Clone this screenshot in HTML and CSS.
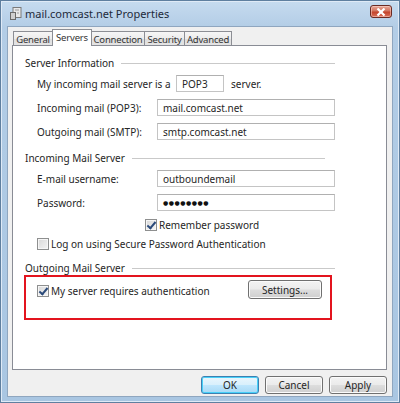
FILE: index.html
```html
<!DOCTYPE html>
<html>
<head>
<meta charset="utf-8">
<link rel="stylesheet" href="styles.css">
</head>
<body>
<div class="window">
  <div class="titlebar">
    <svg class="app-icon" width="12" height="13" viewBox="0 0 12 13">
      <rect x="3" y="0.5" width="8" height="10" fill="#e8e8e8" stroke="#7a7a7a"/>
      <rect x="0.5" y="5.5" width="5" height="7" fill="#cfcfcf" stroke="#6a6a6a"/>
      <line x1="5" y1="3" x2="9" y2="3" stroke="#9a9a9a"/>
      <line x1="7" y1="6" x2="9" y2="6" stroke="#9a9a9a"/>
    </svg>
    <span class="title">mail.comcast.net Properties</span>
    <div class="close">
      <svg width="10" height="8" viewBox="0 0 10 8"><path d="M1.5 0.5 L8.5 7.5 M8.5 0.5 L1.5 7.5" stroke="#fff" stroke-width="2.2"/></svg>
    </div>
  </div>
  <div class="client">
    <div class="tabs">
      <div class="tab tab-general">General</div>
      <div class="tab tab-active tab-servers">Servers</div>
      <div class="tab tab-connection">Connection</div>
      <div class="tab tab-security">Security</div>
      <div class="tab tab-advanced">Advanced</div>
    </div>
    <div class="panel">
      <div class="group-title gt-1"><span>Server Information</span><i></i></div>
      <div class="row row-first">
        <span class="label label-wide">My incoming mail server is a</span>
        <span class="box box-small">POP3</span>
        <span class="after">server.</span>
      </div>
      <div class="row">
        <span class="label">Incoming mail (POP3):</span>
        <span class="box">mail.comcast.net</span>
      </div>
      <div class="row">
        <span class="label">Outgoing mail (SMTP):</span>
        <span class="box">smtp.comcast.net</span>
      </div>

      <div class="group-title gt-2"><span>Incoming Mail Server</span><i></i></div>
      <div class="row row-first">
        <span class="label">E-mail username:</span>
        <span class="box">outboundemail</span>
      </div>
      <div class="row">
        <span class="label">Password:</span>
        <span class="box box-pass">●●●●●●●●</span>
      </div>
      <div class="check-row check-remember">
        <span class="check checked"></span><span>Remember password</span>
      </div>
      <div class="check-row check-logon">
        <span class="check"></span><span>Log on using Secure Password Authentication</span>
      </div>

      <div class="group-title gt-3"><span>Outgoing Mail Server</span><i></i></div>
      <div class="highlight">
        <div class="check-row check-auth">
          <span class="check checked"></span><span>My server requires authentication</span>
        </div>
        <div class="btn btn-settings">Settings...</div>
      </div>
    </div>
    <div class="buttons">
      <div class="btn btn-ok">OK</div>
      <div class="btn">Cancel</div>
      <div class="btn">Apply</div>
    </div>
  </div>
</div>
</body>
</html>
```

FILE: styles.css
```css
* { box-sizing: border-box; }
html, body { margin: 0; padding: 0; }
body {
  width: 400px;
  height: 403px;
  overflow: hidden;
  font-family: "Noto Sans", "DejaVu Sans", sans-serif;
  font-size: 10px;
  color: #262626;
}
.window {
  width: 400px;
  height: 403px;
  display: flex;
  flex-direction: column;
  background: linear-gradient(180deg, #c6dbef 0px, #b3cde6 26px, #a9c6e2 100%);
  border: 1px solid #5f7f9f;
  box-shadow: inset 1px 1px 0 #dfeaf6, inset -1px -1px 0 #dfeaf6;
}
.titlebar {
  height: 25px;
  flex: none;
  display: flex;
  align-items: center;
  padding: 0 7px 0 9px;
}
.app-icon { flex: none; margin-top: -1px; }
.title {
  margin-left: 3px;
  font-size: 11px;
  color: #1d2a3a;
  flex: 1;
}
.close {
  width: 22px;
  height: 13px;
  margin-top: -4px;
  border: 1px solid #6b2a23;
  border-radius: 3px;
  background: linear-gradient(180deg, #e9a99a 0%, #d2735e 45%, #c4432b 55%, #d8705a 100%);
  display: flex;
  align-items: center;
  justify-content: center;
  box-shadow: inset 0 0 0 1px rgba(255,220,210,0.5);
}
.client {
  flex: 1;
  margin: 0 6px 5px 6px;
  background: #f0f0f0;
  border: 1px solid #8fa6bf;
  padding: 2px 4px 0 4px;
  display: flex;
  flex-direction: column;
}
.tabs {
  display: flex;
  height: 16px;
  padding-left: 1px;
  position: relative;
  z-index: 1;
  align-items: flex-end;
  font-size: 9.5px;
  letter-spacing: -0.2px;
}
.tab {
  height: 14px;
  border: 1px solid #8c8e94;
  border-bottom: none;
  border-right: none;
  background: linear-gradient(180deg, #f6f6f6 0%, #ececec 50%, #dedede 51%, #e4e4e4 100%);
  display: flex;
  align-items: center;
  justify-content: center;
  color: #333;
  padding-top: 1px;
  white-space: nowrap;
}
.tab-advanced { border-right: 1px solid #8c8e94; }
.tab-general { width: 39px; }
.tab-servers { width: 40px; }
.tab-connection { width: 52px; }
.tab-security { width: 40px; }
.tab-advanced { width: 48px; }
.tab-active {
  height: 17px;
  margin-bottom: -1px;
  background: #fff;
  border-right: 1px solid #8c8e94;
  align-items: flex-start;
  padding-top: 1px;
}
.tab-active + .tab { border-left: none; }
.panel {
  height: 325px;
  background: #fff;
  border: 1px solid #898c95;
  padding: 10px 0 0 12px;
  margin-right: 1px;
}
.group-title {
  display: flex;
  align-items: center;
  height: 14px;
}
.group-title i {
  flex: 1;
  height: 1px;
  background: #c9c9c9;
  margin-left: 7px;
  margin-top: 1px;
}
.gt-1 { width: 310px; }
.gt-2 { width: 300px; margin-top: 11px; }
.gt-3 { width: 310px; margin-top: 11px; }
.row {
  display: flex;
  align-items: center;
  height: 17px;
  margin-top: 7px;
  padding-left: 12px;
}
.row-first { margin-top: 5px; }
.label { width: 120px; flex: none; }
.label-wide { width: 139px; }
.box {
  width: 178px;
  height: 17px;
  border: 1px solid #c4c4c4;
  border-top-color: #b0b0b0;
  display: flex;
  align-items: center;
  padding-left: 5px;
}
.box-small { width: 48px; }
.box-pass { font-size: 6px; letter-spacing: 0.5px; color: #111; }
.after { margin-left: 7px; }
.check-row {
  display: flex;
  align-items: center;
  height: 13px;
}
.check-remember { margin-top: 7px; padding-left: 120px; }
.check-logon { margin-top: 6px; padding-left: 12px; }
.check {
  width: 12px;
  height: 12px;
  border: 1px solid #8e8f8f;
  background: linear-gradient(135deg, #d8d8d8 0%, #f4f4f4 100%);
  box-shadow: inset 0 0 0 1px #f6f6f6;
  margin-right: 2px;
  position: relative;
  flex: none;
}
.check.checked::after {
  content: "";
  position: absolute;
  left: 3px;
  top: 0px;
  width: 3px;
  height: 7px;
  border: solid #2b4a7a;
  border-width: 0 2px 2px 0;
  transform: rotate(40deg);
}
.highlight {
  margin-left: -1px;
  width: 308px;
  height: 45px;
  border: 2px solid #e3141e;
  display: flex;
  align-items: flex-start;
  justify-content: space-between;
  padding: 3px 8px 0 11px;
}
.check-auth { margin-top: 4px; }
.btn {
  width: 58px;
  height: 18px;
  border: 1px solid #707070;
  border-radius: 3px;
  background: linear-gradient(180deg, #f3f3f3 0%, #ebebeb 48%, #dddddd 52%, #cfcfcf 100%);
  box-shadow: inset 0 0 0 1px #fbfbfb;
  display: flex;
  align-items: center;
  justify-content: center;
}
.btn-settings { width: 74px; height: 19px; }
.buttons {
  display: flex;
  justify-content: flex-end;
  gap: 6px;
  margin-top: 6px;
  padding-right: 1px;
}
.btn-ok {
  border-color: #3c7fb1;
  box-shadow: inset 0 0 0 1px #48d0f8;
  background: linear-gradient(180deg, #eaf6fd 0%, #d9f0fc 48%, #bee6fd 52%, #a7d9f5 100%);
}
```
